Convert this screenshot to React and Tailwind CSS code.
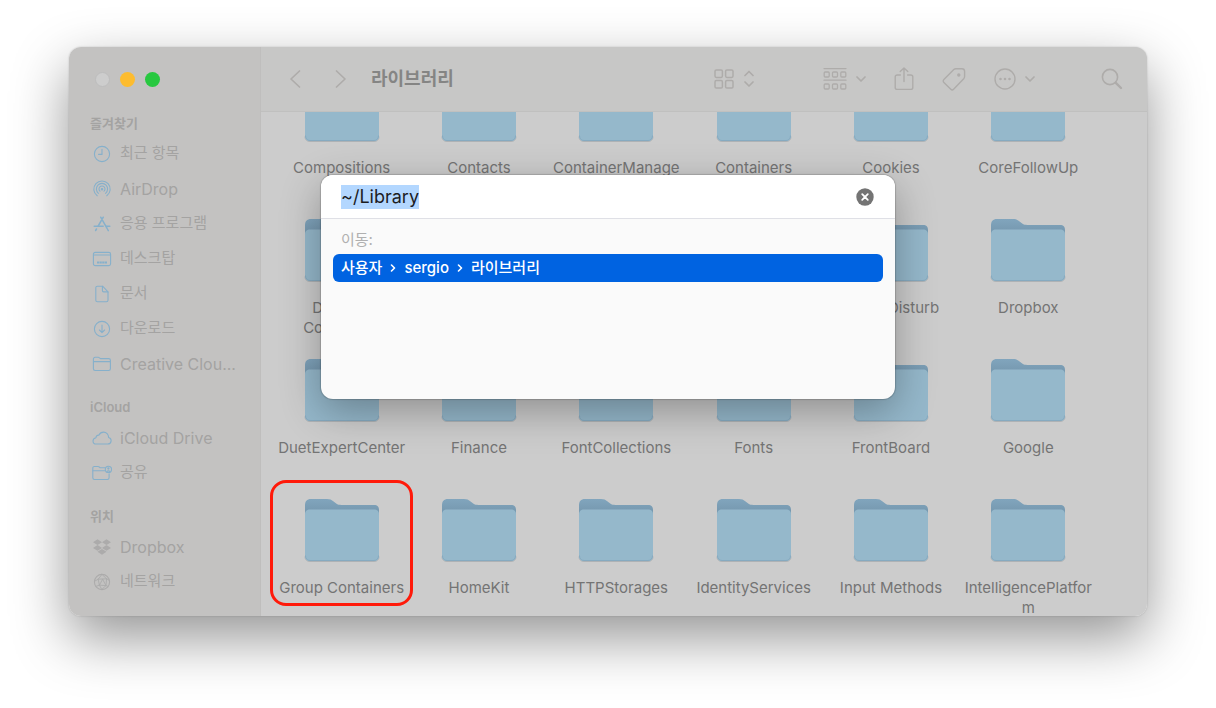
import React, { useEffect, useRef, useState } from 'react'
import { FaDropbox } from 'react-icons/fa'

const Icon = ({ className = 'h-5 w-5', children, size = '0 0 20 20', width = 1.1 }) => (
  <svg
    className={className}
    viewBox={size}
    fill="none"
    stroke="currentColor"
    strokeWidth={width}
    strokeLinecap="round"
    strokeLinejoin="round"
    aria-hidden="true"
  >
    {children}
  </svg>
)

const sidebarIcons = {
  recent: (
    <>
      <circle cx="10" cy="10" r="7.6" />
      <path d="M10 5.2V10.4H6.6" />
    </>
  ),
  airdrop: (
    <>
      <path d="M5.2 16.8a8.2 8.2 0 1 1 9.6 0" />
      <path d="M6.4 14.3a5.6 5.6 0 1 1 7.2 0" />
      <path d="M8 12.2a3 3 0 1 1 4 0" />
      <circle cx="10" cy="10.2" r="0.7" fill="currentColor" />
    </>
  ),
  apps: (
    <g strokeWidth="1.5">
      <path d="M8.7 3.2 15.2 14.6M11.3 3.2 6.2 12M4.5 15l-.9 1.5M15.7 15.5l.6 1.1" />
      <path d="M2.2 12.2h9M14.3 12.2h3.5" />
    </g>
  ),
  desktop: (
    <>
      <rect x="1.4" y="3.4" width="17.2" height="13.2" rx="1.8" />
      <path d="M1.6 6h16.8" />
      <path d="M5 13.5h10" strokeWidth="2" strokeDasharray="2.2 .4" strokeLinecap="butt" />
    </>
  ),
  document: (
    <>
      <path d="M5.4 2.2h5.2l5.4 5.6v8.4a1.6 1.6 0 0 1-1.6 1.6h-9a1.6 1.6 0 0 1-1.6-1.6V3.8a1.6 1.6 0 0 1 1.6-1.6Z" />
      <path d="M10.4 2.4v4.2c0 .8.5 1.3 1.3 1.3h4.2" />
    </>
  ),
  download: (
    <>
      <circle cx="10" cy="10" r="7.6" />
      <path d="M10 6v7.4M7.4 11l2.6 2.6 2.6-2.6" />
    </>
  ),
  folder: (
    <>
      <path d="M1.4 14.8V5c0-1 .7-1.7 1.7-1.7h3.2c.5 0 .9.2 1.2.5l.9.8h8.3c1 0 1.7.7 1.7 1.7v8.5c0 1-.7 1.7-1.7 1.7H3.1c-1 0-1.7-.7-1.7-1.7Z" />
      <path d="M1.6 7.6h16.6" />
    </>
  ),
  cloud: (
    <path d="M4.4 16h11.4a3.3 3.3 0 0 0 .8-6.5c0-3.200-2.300-5.400-5-5.400-2.200 0-3.800 1.200-4.600 3C5.200 6.900 4 8.100 4 9.700 2.200 10.100 1 11.300 1 12.900 1 14.700 2.500 16 4.400 16Z" />
  ),
  shared: (
    <>
      <path d="M13 4.800H8.200l-.9-.8c-.3-.3-.7-.5-1.200-.5H2.400c-.9 0-1.600.7-1.600 1.600v9.700c0 1 .7 1.700 1.600 1.700h13c1 0 1.700-.7 1.700-1.700v-4" />
      <path d="M1 7.800h11.600" />
      <circle cx="16.400" cy="6.400" r="3.100" />
      <circle cx="16.400" cy="5.500" r=".6" fill="currentColor" />
      <path d="M14.800 8.600c.8-1 2.400-1 3.200 0" />
    </>
  ),
  network: (
    <>
      <circle cx="10" cy="10" r="7.6" />
      <path
        d="M10 2.400 6.200 7.200l-3.600 2M10 2.400l4.600 4.400 2.600 1.400M6.200 7.200l8.400-.4M6.200 7.200l1.200 6 6.600.4.600-6.800M7.400 13.200l3.200-6M7.400 13.200l-3.600 1.200M7.400 13.200l2.400 4.200 4.200-3.800 2 .8M10.600 7.200l3.400 6.400"
        strokeWidth=".9"
      />
    </>
  ),
}

const sections = [
  {
    title: '즐겨찾기',
    items: [
      { label: '최근 항목', icon: 'recent' },
      { label: 'AirDrop', icon: 'airdrop' },
      { label: '응용 프로그램', icon: 'apps' },
      { label: '데스크탑', icon: 'desktop' },
      { label: '문서', icon: 'document' },
      { label: '다운로드', icon: 'download' },
      { label: 'Creative Clou...', icon: 'folder' },
    ],
  },
  {
    title: 'iCloud',
    items: [
      { label: 'iCloud Drive', icon: 'cloud' },
      { label: '공유', icon: 'shared' },
    ],
  },
  {
    title: '위치',
    items: [
      { label: 'Dropbox', icon: 'dropbox', muted: true },
      { label: '네트워크', icon: 'network', muted: true },
    ],
  },
]

const folders = [
  'Compositions',
  'Contacts',
  'ContainerManager',
  'Containers',
  'Cookies',
  'CoreFollowUp',
  'Daemon Containers',
  'DataAccess',
  'Developer',
  'Dictionaries',
  'DoNotDisturb',
  'Dropbox',
  'DuetExpertCenter',
  'Finance',
  'FontCollections',
  'Fonts',
  'FrontBoard',
  'Google',
  'Group Containers',
  'HomeKit',
  'HTTPStorages',
  'IdentityServices',
  'Input Methods',
  'IntelligencePlatform',
]

const Sidebar = () => (
  <aside className="w-48 shrink-0 border-r border-[#bfbebd] bg-[#c3c2c1]">
    <div className="flex h-[65px] items-center gap-[10px] pl-[26px]">
      <button aria-label="닫기" className="h-[15px] w-[15px] rounded-full border border-[#bdbdbd] bg-[#cdcdcd]" />
      <button aria-label="최소화" className="h-[15px] w-[15px] rounded-full bg-[#fdbc2f]" />
      <button aria-label="확대" className="h-[15px] w-[15px] rounded-full bg-[#28c840]" />
    </div>
    <nav className="flex flex-col gap-[15px]">
      {sections.map(({ title, items }) => (
        <section key={title}>
          <h2 className="flex h-6 items-center pl-[21px] text-[13px] font-semibold text-[#a4a3a2]">{title}</h2>
          <ul>
            {items.map(({ label, icon, muted }) => (
              <li key={label}>
                <a href="#" className="flex h-[35px] items-center gap-2 pl-[23px] text-[#a4a3a2]">
                  <span className={muted ? 'text-[#acabab]' : 'text-[#86b0cb]'}>
                    {icon === 'dropbox' ? <FaDropbox className="h-5 w-5 p-px" /> : <Icon>{sidebarIcons[icon]}</Icon>}
                  </span>
                  <span className={/^[A-Za-z]/.test(label) ? 'text-base' : 'text-[15px]'}>{label}</span>
                </a>
              </li>
            ))}
          </ul>
        </section>
      ))}
    </nav>
  </aside>
)

const Chevron = () => (
  <Icon className="h-[10px] w-[10px]" size="0 0 10 10" width={1.7}>
    <path d="M1 3l4 4 4-4" />
  </Icon>
)

const Toolbar = () => (
  <header className="z-10 flex h-[65px] shrink-0 items-center border-b border-[#c0c0bf] bg-[#c7c7c6] pr-6 pl-7 text-[#aeacaa]">
    <button aria-label="뒤로">
      <Icon className="h-5 w-3" size="0 0 12 20" width={1.7}>
        <path d="M10.5 2 2 10l8.5 8" />
      </Icon>
    </button>
    <button aria-label="앞으로" className="ml-[34px]">
      <Icon className="h-5 w-3" size="0 0 12 20" width={1.7}>
        <path d="M1.5 2 10 10l-8.5 8" />
      </Icon>
    </button>
    <h1 className="ml-6 flex-1 text-lg font-bold text-[#858584]">라이브러리</h1>
    <button aria-label="보기" className="flex items-center gap-[10px]">
      <Icon className="h-5 w-5" width={1.5}>
        <rect x="1" y="1" width="7.4" height="7.4" rx="1.3" />
        <rect x="11.6" y="1" width="7.4" height="7.4" rx="1.3" />
        <rect x="1" y="11.6" width="7.4" height="7.4" rx="1.3" />
        <rect x="11.6" y="11.6" width="7.4" height="7.4" rx="1.3" />
      </Icon>
      <Icon className="h-5 w-[10px]" size="0 0 10 20" width={1.7}>
        <path d="M1 6.5l4-4 4 4M1 13l4 4 4-4" />
      </Icon>
    </button>
    <div className="ml-[69px] flex items-center gap-7">
      <button aria-label="그룹" className="flex items-center gap-[9px]">
        <Icon className="h-6 w-6" size="0 0 24 24" width={1.3}>
          <path d="M1 1.6h22M1 13.2h22" />
          <rect x="1.2" y="5" width="5" height="5" rx="1" />
          <rect x="9.5" y="5" width="5" height="5" rx="1" />
          <rect x="17.8" y="5" width="5" height="5" rx="1" />
          <rect x="1.2" y="17" width="5" height="5" rx="1" />
          <rect x="9.5" y="17" width="5" height="5" rx="1" />
          <rect x="17.8" y="17" width="5" height="5" rx="1" />
        </Icon>
        <Chevron />
      </button>
      <button aria-label="공유">
        <Icon className="h-6 w-5" size="0 0 20 24" width={1.4}>
          <path d="M6.4 8H3.2C2 8 1.200 8.800 1.200 10v10.400c0 1.200.8 2 2 2h13.600c1.200 0 2-.8 2-2V10c0-1.200-.8-2-2-2h-3.200" />
          <path d="M10 14.500V1M6.200 4.600 10 1l3.800 3.600" />
        </Icon>
      </button>
      <button aria-label="태그">
        <Icon className="h-6 w-6" size="0 0 24 24" width={1.4}>
          <path d="M13.800 1.700h6.100c1.600 0 2.700 1.200 2.700 2.700v5.200c0 .9-.3 1.500-.9 2.200L11.600 22.200c-.9.900-1.900.9-2.800 0l-6.900-6.800c-.9-.9-.9-1.900 0-2.800L11.800 2.600c.6-.6 1.100-.9 2-.9Z" />
          <circle cx="16.800" cy="8" r="1" fill="currentColor" />
        </Icon>
      </button>
      <button aria-label="더 보기" className="flex items-center gap-[9px]">
        <Icon className="h-[22px] w-[22px]" size="0 0 22 22" width={1.4}>
          <circle cx="11" cy="11" r="10" />
          <path d="M6.5 11h.01M11 11h.01M15.5 11h.01" strokeWidth="2.6" />
        </Icon>
        <Chevron />
      </button>
    </div>
    <button aria-label="검색" className="ml-[66px]">
      <Icon className="h-[22px] w-[22px]" size="0 0 22 22" width={1.6}>
        <circle cx="9" cy="9" r="7.6" />
        <path d="M14.8 14.8 20 20" strokeWidth="2.4" />
      </Icon>
    </button>
  </header>
)

const FolderIcon = () => (
  <svg className="h-16 w-[76px]" viewBox="0 0 76 64" aria-hidden="true">
    <defs>
      <linearGradient id="folderBack" x1="0" y1="0" x2="0" y2="1">
        <stop offset="0" stopColor="#81a5bd" />
        <stop offset="0.25" stopColor="#7597ae" />
      </linearGradient>
    </defs>
    <path
      d="M1 8C1 3 2.800 1 7 1h16c3 0 4.600.8 6.600 2.500l2.600 2.100C33.800 6.800 35.200 7 37.500 7H70c3.500 0 5 1.800 5 5v45H1Z"
      fill="url(#folderBack)"
    />
    <path d="M1 58.500c0 3.200 1.800 5 5 5h64c3.200 0 5-1.800 5-5" fill="none" stroke="#aeb2b5" />
    <path d="M1 16.500C1 13 2.800 11.500 6 11.500h64c3.200 0 5 1.500 5 5V58c0 3.200-1.800 5-5 5H6c-3.200 0-5-1.800-5-5Z" fill="#95b8cb" />
    <path d="M1.500 57.500c0 3.200 1.500 5 4.500 5h64c3 0 4.500-1.800 4.500-5" fill="none" stroke="#86aac0" />
  </svg>
)

const FolderGrid = () => (
  <ul className="-mt-[34px] grid auto-rows-[140px] grid-cols-6 pr-[50px] pl-3">
    {folders.map((name) => (
      <li key={name} className="relative flex flex-col items-center">
        <FolderIcon />
        <span className="mt-4 w-[130px] text-center text-[15px] leading-5 break-words text-[#747474]">{name}</span>
        {name === 'Group Containers' && (
          <span className="absolute -inset-x-[3px] -top-[18px] h-[126px] rounded-2xl border-[3px] border-[#ff1a0a]" />
        )}
      </li>
    ))}
  </ul>
)

const PathArrow = () => (
  <Icon className="h-2 w-[6px]" size="0 0 6 8" width={1.6}>
    <path d="M1.5 1l3 3-3 3" />
  </Icon>
)

const GoToFolder = () => {
  const [path, setPath] = useState('~/Library')
  const inputRef = useRef(null)

  useEffect(() => {
    inputRef.current.focus()
    inputRef.current.select()
  }, [])

  return (
    <div
      role="dialog"
      aria-label="폴더로 이동"
      className="absolute top-32 left-1/2 z-20 min-h-56 w-[574px] -translate-x-1/2 overflow-hidden rounded-xl bg-[#fafafa] shadow-[0_0_1px_1px_rgba(0,0,0,0.16),0_12px_40px_rgba(0,0,0,0.3)]"
    >
      <div className="flex h-11 items-center border-b border-[#dfe0e6] bg-white pr-[21px] pl-5">
        <input
          ref={inputRef}
          aria-label="경로"
          value={path}
          onChange={(e) => setPath(e.target.value)}
          className="h-6 min-w-0 flex-1 bg-transparent text-lg leading-6 text-[#1d1d1f] outline-none selection:bg-[#b3d7ff] selection:text-[#1d1d1f]"
        />
        <button aria-label="지우기" onClick={() => setPath('')}>
          <svg className="h-[18px] w-[18px]" viewBox="0 0 18 18" aria-hidden="true">
            <circle cx="9" cy="9" r="8.7" fill="#747474" />
            <path d="M6.2 6.2l5.6 5.6M11.8 6.2l-5.6 5.6" stroke="#fff" strokeWidth="1.8" strokeLinecap="round" />
          </svg>
        </button>
      </div>
      <div className="px-3 pt-[11px]">
        <p className="px-2 text-[15px] leading-5 text-[#b0b0b0]">이동:</p>
        <button className="mt-1 flex h-7 w-full items-center gap-2 rounded-md bg-[#0063e1] px-2 text-[15px] font-medium text-white">
          <span>사용자</span>
          <PathArrow />
          <span>sergio</span>
          <PathArrow />
          <span>라이브러리</span>
        </button>
      </div>
    </div>
  )
}

const App = () => (
  <main className="flex h-screen bg-white px-[69px] pt-[47px] pb-[92px] font-['Inter','Noto_Sans_CJK_KR',sans-serif]">
    <div className="relative flex min-w-0 flex-1 rounded-xl shadow-[0_0_2px_rgba(0,0,0,0.2),0_22px_56px_rgba(0,0,0,0.42)]">
      <div className="flex min-w-0 flex-1 overflow-hidden rounded-xl">
        <Sidebar />
        <div className="flex min-w-0 flex-1 flex-col bg-[#cccccc]">
          <Toolbar />
          <div className="min-h-0 flex-1 overflow-hidden">
            <FolderGrid />
          </div>
        </div>
      </div>
      <GoToFolder />
    </div>
  </main>
)

export default App
